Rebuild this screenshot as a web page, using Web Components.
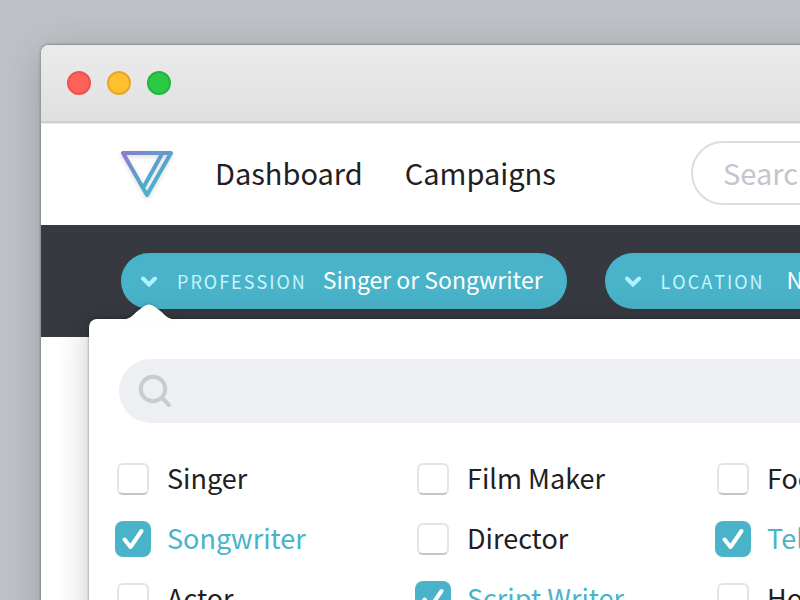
<!DOCTYPE html>
<html lang="en">
<head>
<meta charset="utf-8">
<title>Campaign filters</title>
<style>
html, body { margin: 0; height: 100%; }
body {
  overflow: hidden;
  background: #bec2c7;
  color: #1f2023;
  font-family: "Noto Sans CJK SC", "Open Sans", sans-serif;
}
</style>
</head>
<body>
<app-window>
  <app-header>
    <nav-link href="#dashboard">Dashboard</nav-link>
    <nav-link href="#campaigns">Campaigns</nav-link>
  </app-header>
  <filter-bar>
    <filter-chip label="Profession">Singer or Songwriter</filter-chip>
    <filter-chip label="Location">New York</filter-chip>
    <filter-popover slot="popover">
      <check-option>Singer</check-option>
      <check-option>Film Maker</check-option>
      <check-option>Food Critic</check-option>
      <check-option checked>Songwriter</check-option>
      <check-option>Director</check-option>
      <check-option checked>Television</check-option>
      <check-option>Actor</check-option>
      <check-option checked>Script Writer</check-option>
      <check-option>Host</check-option>
    </filter-popover>
  </filter-bar>
</app-window>

<script>
const define = (name, html, setup) => {
  const template = document.createElement('template');
  template.innerHTML = html;
  customElements.define(name, class extends HTMLElement {
    constructor() {
      super();
      this.attachShadow({ mode: 'open' }).append(template.content.cloneNode(true));
    }
    connectedCallback() { if (setup) setup(this, this.shadowRoot); }
  });
};

define('app-window', `
<style>
:host { display: block; box-sizing: border-box; height: 100%; padding: 45px 0 0 41px; }
main {
  box-sizing: border-box; width: calc(100% + 320px); min-height: calc(100% + 80px);
  background: #fff; border-radius: 8px;
  box-shadow: 0 0 3px rgba(0,0,0,.5), 0 8px 40px rgba(0,0,0,.18);
}
.bar {
  display: flex; align-items: center; gap: 16px; box-sizing: border-box; height: 78px; padding: 0 26px;
  border-radius: 8px 8px 0 0; border-bottom: 2px solid #cfcfcf;
  background: linear-gradient(#ebebeb, #e0e0e0);
  box-shadow: 0 1px 1px #ececec;
}
button { box-sizing: border-box; width: 24px; height: 24px; padding: 0; border-radius: 50%; border: 2px solid; }
.close { background: #ff6158; border-color: #e9544c; }
.min { background: #ffbf2f; border-color: #e3a82c; }
.max { background: #2aca44; border-color: #24b539; }
</style>
<main>
  <div class="bar">
    <button class="close" aria-label="Close"></button>
    <button class="min" aria-label="Minimize"></button>
    <button class="max" aria-label="Zoom"></button>
  </div>
  <slot></slot>
</main>`);

define('app-header', `
<style>
:host { display: flex; align-items: center; height: 102px; padding: 0 80px; }
.logo { display: block; width: 56px; height: 56px; margin: 0 40px 0 -2px; }
nav { display: flex; gap: 42px; flex: 0 0 auto; width: 476px; padding-bottom: 4px; }
input {
  flex: 1; min-width: 0; box-sizing: border-box; height: 64px; padding: 0 30px 2px;
  border: 2px solid #dadde4; border-radius: 32px; background: #fff;
  font: inherit; font-size: 29px; color: inherit; margin-top: -2px;
}
input::placeholder { color: #c1c6cf; opacity: 1; }
</style>
<a class="logo" href="#home" aria-label="Home">
<svg width="56" height="56" viewBox="0 0 56 56" fill="none">
  <defs><linearGradient id="g" gradientUnits="userSpaceOnUse" x1="4" y1="6" x2="34" y2="44">
    <stop offset="0" stop-color="#8c7bd2"/><stop offset=".75" stop-color="#50a9cc"/><stop offset="1" stop-color="#4ab3ca"/>
  </linearGradient></defs>
  <g stroke-linejoin="round" stroke-width="4" style="filter:drop-shadow(0 2px 2px rgba(0,0,0,.14))">
    <path d="M4 7H52L28 49Z M43.500 7L24 42" stroke="url(#g)"/>
  </g>
</svg></a>
<nav><slot></slot></nav>
<input type="search" placeholder="Search" aria-label="Search">`);

define('nav-link', `
<style>
:host { display: block; }
a { color: inherit; text-decoration: none; font-size: 29px; line-height: 40px; white-space: nowrap; }
</style>
<a><slot></slot></a>`, (el, root) => { root.querySelector('a').href = el.getAttribute('href'); });

define('filter-bar', `
<style>
:host {
  display: flex; position: relative; gap: 38px; box-sizing: border-box; height: 112px; padding: 28px 80px;
  background: #373941;
}
</style>
<slot></slot><slot name="popover"></slot>`);

define('filter-chip', `
<style>
:host { display: block; flex: none; }
button {
  display: flex; align-items: center; height: 56px; padding: 0 24px 0 19px;
  border: 0; border-radius: 28px; background: #49b3c9; color: #fff; font: inherit; white-space: nowrap;
}
svg { margin-right: 19px; }
.label { color: #c6f5fd; font-size: 18px; line-height: 28px; letter-spacing: 2px; text-transform: uppercase; text-align: left; min-width: 110px; margin-right: 16px; font-kerning: none; }
.value { font-size: 23px; line-height: 32px; padding-bottom: 4px; }
</style>
<button aria-haspopup="true">
  <svg width="18" height="12" viewBox="0 0 18 12" fill="none"><path d="M3 3.500L9 9.500L15 3.500" stroke="#aff2ff" stroke-width="4" stroke-linecap="round"/></svg>
  <span class="label"></span><span class="value"><slot></slot></span>
</button>`, (el, root) => { root.querySelector('.label').textContent = el.getAttribute('label'); });

define('filter-popover', `
<style>
:host {
  display: block; position: absolute; left: 48px; right: 80px; top: 94px; box-sizing: border-box; padding: 40px 30px;
  background: #fff; border-radius: 8px;
  box-shadow: 0 0 3px rgba(0,0,0,.45), 0 6px 34px rgba(0,0,0,.22);
}
.arrow { position: absolute; left: 34px; top: -16px; filter: drop-shadow(0 -1px 1px rgba(0,0,0,.16)); }
.search { display: flex; align-items: center; height: 64px; padding: 0 18px; border-radius: 32px; background: #edeff3; }
input { flex: 1; min-width: 0; height: 40px; border: 0; outline: 0; background: none; font: inherit; font-size: 27px; margin-left: 12px; }
.options { display: grid; grid-template-columns: repeat(3, 300px); grid-auto-rows: 60px; margin: 26px 0 0 -4px; }
</style>
<svg class="arrow" width="52" height="18" viewBox="0 0 52 18"><path d="M0 18V16.500C7 16 10 12 14 8.500L20.500 3.500Q26 -.500 31.500 3.500L38 8.500C42 12 45 16 52 16.500V18Z" fill="#fff"/></svg>
<label class="search">
  <svg width="36" height="36" viewBox="0 0 36 36" fill="none" stroke="#c8ccd0" stroke-width="4"><circle cx="16" cy="16" r="12.200"/><path d="M25 25L32 32" stroke-linecap="round"/></svg>
  <input type="text" aria-label="Find a profession">
</label>
<div class="options"><slot></slot></div>`);

define('check-option', `
<style>
:host { display: block; }
label { display: flex; align-items: center; gap: 16px; height: 60px; font-size: 27px; line-height: 40px; white-space: nowrap; }
.text { padding-bottom: 2px; }
.box { display: grid; place-items: center; width: 36px; height: 36px; }
.box > * { grid-area: 1 / 1; }
input {
  appearance: none; box-sizing: border-box; margin: 0; width: 32px; height: 32px;
  border: 2px solid #e1e4ea; border-bottom-color: #c3c5cb; border-radius: 6px; background: #fff;
}
input:checked { width: 36px; height: 36px; border: 0; border-radius: 8px; background: #49b3c9; }
svg { visibility: hidden; pointer-events: none; }
input:checked + svg { visibility: visible; }
label:has(input:checked) { color: #49b3c9; }
</style>
<label>
  <span class="box"><input type="checkbox"><svg width="36" height="36" viewBox="0 0 36 36" fill="none"><path d="M9.500 18.500L15.500 26L26.500 10" stroke="#fff" stroke-width="4" stroke-linecap="round" stroke-linejoin="round"/></svg></span>
  <span class="text"><slot></slot></span>
</label>`, (el, root) => { root.querySelector('input').checked = el.hasAttribute('checked'); });
</script>
</body>
</html>
